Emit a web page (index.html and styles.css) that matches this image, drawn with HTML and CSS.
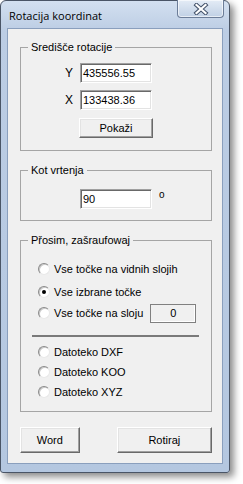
FILE: index.html
```html
<!DOCTYPE html>
<html>
<head>
<meta charset="utf-8">
<link rel="stylesheet" href="styles.css">
</head>
<body>
<div class="window">
  <div class="titlebar">
    <span class="title">Rotacija koordinat</span>
    <div class="close">
      <svg width="16" height="12" viewBox="0 0 16 12">
        <path d="M3.5 2 L12.5 10 M12.5 2 L3.5 10" stroke="#44536b" stroke-width="4.2" stroke-linecap="square"/>
        <path d="M3.5 2 L12.5 10 M12.5 2 L3.5 10" stroke="#ffffff" stroke-width="2.2" stroke-linecap="square"/>
      </svg>
    </div>
  </div>
  <div class="client">
    <fieldset class="group g1">
      <legend>Središče rotacije</legend>
      <div class="row">
        <span class="lbl">Y</span>
        <div class="edit">435556.55</div>
      </div>
      <div class="row r2">
        <span class="lbl">X</span>
        <div class="edit">133438.36</div>
      </div>
      <div class="btn pokazi">Pokaži</div>
    </fieldset>

    <fieldset class="group g2">
      <legend>Kot vrtenja</legend>
      <div class="row angle">
        <div class="edit">90</div>
        <span class="deg">o</span>
      </div>
    </fieldset>

    <fieldset class="group g3">
      <legend>Přosim, zašraufowaj</legend>
      <div class="radio first"><span class="dot"></span>Vse točke na vidnih slojih</div>
      <div class="radio second"><span class="dot on"></span>Vse izbrane točke</div>
      <div class="radio third"><span class="dot"></span>Vse točke na sloju<div class="static">0</div></div>
      <div class="sep"></div>
      <div class="radio"><span class="dot"></span>Datoteko DXF</div>
      <div class="radio"><span class="dot"></span>Datoteko KOO</div>
      <div class="radio"><span class="dot"></span>Datoteko XYZ</div>
    </fieldset>

    <div class="buttons">
      <div class="btn word">Word</div>
      <div class="btn rotiraj">Rotiraj</div>
    </div>
  </div>
</div>
</body>
</html>
```
FILE: styles.css
```css
html, body {
  margin: 0;
  padding: 0;
  background: #ffffff;
}
body {
  width: 243px;
  height: 484px;
  overflow: hidden;
  font-family: "Liberation Sans", Arial, sans-serif;
  font-size: 11px;
  color: #000;
}
.window {
  width: 230px;
  height: 473px;
  box-sizing: border-box;
  border: 1px solid #4a5566;
  border-radius: 6px 6px 3px 3px;
  background: linear-gradient(180deg, #d3e0f0 0%, #bccde4 30px, #b4c7e0 100%);
  box-shadow: 4px 4px 7px rgba(0,0,0,0.45);
  display: flex;
  flex-direction: column;
}
.titlebar {
  height: 27px;
  display: flex;
  align-items: flex-start;
  padding-left: 8px;
}
.title {
  font-family: "Open Sans", "Liberation Sans", sans-serif;
  font-size: 11px;
  margin-top: 7px;
  color: #000;
}
.close {
  margin-left: auto;
  margin-right: 5px;
  margin-top: -1px;
  width: 47px;
  height: 18px;
  box-sizing: border-box;
  border: 1px solid #6c7d98;
  border-top: none;
  border-radius: 0 0 4px 4px;
  background: linear-gradient(180deg, #e4ecf6 0%, #d2deed 50%, #c0d0e5 100%);
  box-shadow: inset 0 0 0 1px rgba(255,255,255,0.6);
  display: flex;
  align-items: center;
  justify-content: center;
}
.close svg { display: block; margin-top: 1px; }
.client {
  margin: 0 6px;
  height: 436px;
  box-sizing: border-box;
  background: #f0f0f0;
  border: 1px solid #8a9fbd;
  padding: 12px 10px 0 12px;
}
.group {
  margin: 0;
  padding: 0;
  border: 1px solid #a5a5a5;
  min-width: 0;
}
.group legend {
  margin-left: 7px;
  padding: 0 3px;
  line-height: 13px;
  height: 13px;
}
.g1 { height: 110px; box-sizing: border-box; padding-top: 9px; }
.g2 { margin-top: 13px; height: 57px; box-sizing: border-box; padding-top: 12px; }
.g3 { margin-top: 13px; height: 178px; box-sizing: border-box; padding-top: 12px; }
.row {
  display: flex;
  align-items: center;
  height: 20px;
  padding-left: 40px;
}
.r2 { margin-top: 7px; }
.lbl {
  width: 12px;
  text-align: right;
  margin-right: 7px;
  font-size: 12px;
}
.edit {
  width: 72px;
  height: 20px;
  box-sizing: border-box;
  background: #fff;
  border-top: 1px solid #a0a0a0;
  border-left: 1px solid #a0a0a0;
  border-bottom: 1px solid #fff;
  border-right: 1px solid #fff;
  box-shadow: inset 1px 1px 0 #696969, inset -1px -1px 0 #e3e3e3;
  padding-left: 2px;
  line-height: 18px;
}
.btn {
  box-sizing: border-box;
  background: #f0f0f0;
  border-top: 1px solid #fff;
  border-left: 1px solid #fff;
  border-right: 1px solid #696969;
  border-bottom: 1px solid #696969;
  box-shadow: inset -1px -1px 0 #a0a0a0, inset 1px 1px 0 #e3e3e3;
  text-align: center;
}
.pokazi {
  width: 74px;
  height: 20px;
  line-height: 18px;
  margin: 8px 0 0 58px;
}
.angle { padding-left: 59px; }
.deg {
  align-self: flex-start;
  margin-left: 7px;
  font-size: 10px;
  line-height: 10px;
  margin-top: 1px;
}
.radio {
  display: flex;
  align-items: center;
  height: 20px;
  padding-left: 17px;
}
.radio.second { margin-top: 3px; }
.radio.third { margin-top: 1px; }
.dot {
  width: 12px;
  height: 12px;
  box-sizing: border-box;
  border-radius: 50%;
  background: #fff;
  border: 1px solid;
  border-color: #8a8a8a #e8e8e8 #e8e8e8 #8a8a8a;
  box-shadow: inset 1px 1px 0 #c8c8c8;
  margin-right: 4px;
  flex: none;
  display: flex;
  align-items: center;
  justify-content: center;
}
.dot.on::after {
  content: "";
  width: 4px;
  height: 4px;
  border-radius: 50%;
  background: #000;
}
.static {
  margin-left: 7px;
  width: 46px;
  height: 19px;
  box-sizing: border-box;
  border: 1px solid #808080;
  box-shadow: inset -1px -1px 0 #fff;
  text-align: center;
  line-height: 17px;
}
.sep {
  margin: 12px 0 5px 11px;
  width: 167px;
  height: 2px;
  background: #7a7a7a;
}
.buttons {
  display: flex;
  margin-top: 15px;
}
.word {
  width: 60px;
  height: 26px;
  line-height: 24px;
}
.rotiraj {
  width: 96px;
  height: 26px;
  line-height: 24px;
  margin-left: 37px;
}
```
